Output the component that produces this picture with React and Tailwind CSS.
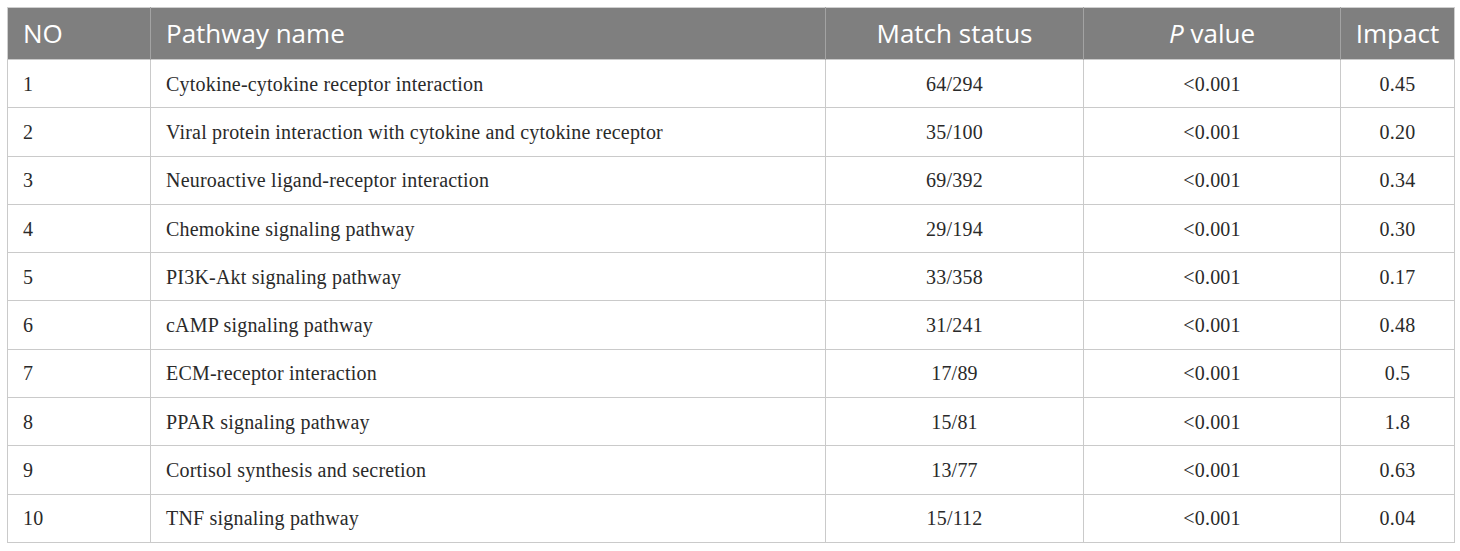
import React from "react";

const rows = [
  ["1", "Cytokine-cytokine receptor interaction", "64/294", "<0.001", "0.45"],
  ["2", "Viral protein interaction with cytokine and cytokine receptor", "35/100", "<0.001", "0.20"],
  ["3", "Neuroactive ligand-receptor interaction", "69/392", "<0.001", "0.34"],
  ["4", "Chemokine signaling pathway", "29/194", "<0.001", "0.30"],
  ["5", "PI3K-Akt signaling pathway", "33/358", "<0.001", "0.17"],
  ["6", "cAMP signaling pathway", "31/241", "<0.001", "0.48"],
  ["7", "ECM-receptor interaction", "17/89", "<0.001", "0.5"],
  ["8", "PPAR signaling pathway", "15/81", "<0.001", "1.8"],
  ["9", "Cortisol synthesis and secretion", "13/77", "<0.001", "0.63"],
  ["10", "TNF signaling pathway", "15/112", "<0.001", "0.04"],
];

export default function App() {
  return (
    <div className="bg-white w-[1460px] h-[551px] pt-[7px] pl-[7px]">
      <table className="border-collapse w-[1447px] table-fixed border border-[#cfcfcf]">
        <colgroup>
          <col className="w-[143px]" />
          <col className="w-[675px]" />
          <col className="w-[258px]" />
          <col className="w-[257px]" />
          <col className="w-[114px]" />
        </colgroup>
        <thead>
          <tr className="bg-[#7f7f7f] text-white h-[52px] text-[26px] font-['Open_Sans',sans-serif]">
            <th className="text-left font-normal pl-[15px] border-r border-[#a3a3a3]">NO</th>
            <th className="text-left font-normal pl-[15px] border-r border-[#a3a3a3]">Pathway name</th>
            <th className="text-center font-normal border-r border-[#a3a3a3]">Match status</th>
            <th className="text-center font-normal border-r border-[#a3a3a3]"><i>P</i> value</th>
            <th className="text-center font-normal">Impact</th>
          </tr>
        </thead>
        <tbody className="font-['Liberation_Serif',serif] text-[20px] tracking-[0.2px] text-[#2a2a2a]">
          {rows.map((r) => (
            <tr key={r[0]} className="h-[48.3px]">
              <td className="pl-[15px] border border-[#cacaca]">{r[0]}</td>
              <td className="pl-[15px] border border-[#cacaca]">{r[1]}</td>
              <td className="text-center border border-[#cacaca]">{r[2]}</td>
              <td className="text-center border border-[#cacaca]">{r[3]}</td>
              <td className="text-center border border-[#cacaca]">{r[4]}</td>
            </tr>
          ))}
        </tbody>
      </table>
    </div>
  );
}
